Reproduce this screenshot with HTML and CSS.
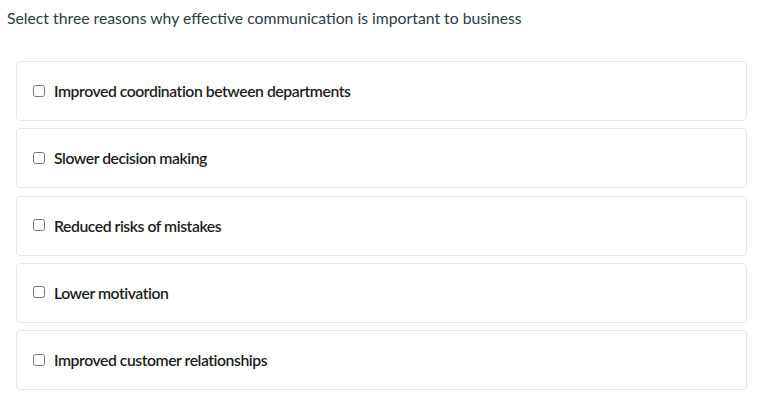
FILE: index.html
```html
<!DOCTYPE html>
<html>
<head>
<meta charset="utf-8">
<link rel="stylesheet" href="styles.css">
</head>
<body>
<div class="question">
  <p class="prompt">Select three reasons why effective communication is important to business</p>
  <div class="options">
    <label class="option"><input type="checkbox" class="box"><span class="text">Improved coordination between departments</span></label>
    <label class="option"><input type="checkbox" class="box"><span class="text">Slower decision making</span></label>
    <label class="option"><input type="checkbox" class="box"><span class="text">Reduced risks of mistakes</span></label>
    <label class="option"><input type="checkbox" class="box"><span class="text">Lower motivation</span></label>
    <label class="option"><input type="checkbox" class="box"><span class="text">Improved customer relationships</span></label>
  </div>
</div>
</body>
</html>
```
FILE: styles.css
```css
html, body { margin: 0; padding: 0; background: #fff; }
body { font-family: Lato, "Noto Sans", sans-serif; color: #2d3b45; }
.question { padding: 9px 19px 0 7px; }
.prompt { margin: 0; font-size: 15.75px; line-height: 18px; color: #2d3b45; }
.options { display: flex; flex-direction: column; gap: 7.25px; margin: 34px 0 0 9px; }
.option {
  box-sizing: border-box; display: flex; align-items: center; height: 60px;
  border: 1px solid #e3e6ea; border-radius: 4px; padding: 0 0 1px 16px;
}
.box { width: 12px; height: 12px; margin: 0 9px 0 0; }
.text { font-size: 15.75px; font-weight: 600; color: #1d1d1d; letter-spacing: -0.45px; }
```
